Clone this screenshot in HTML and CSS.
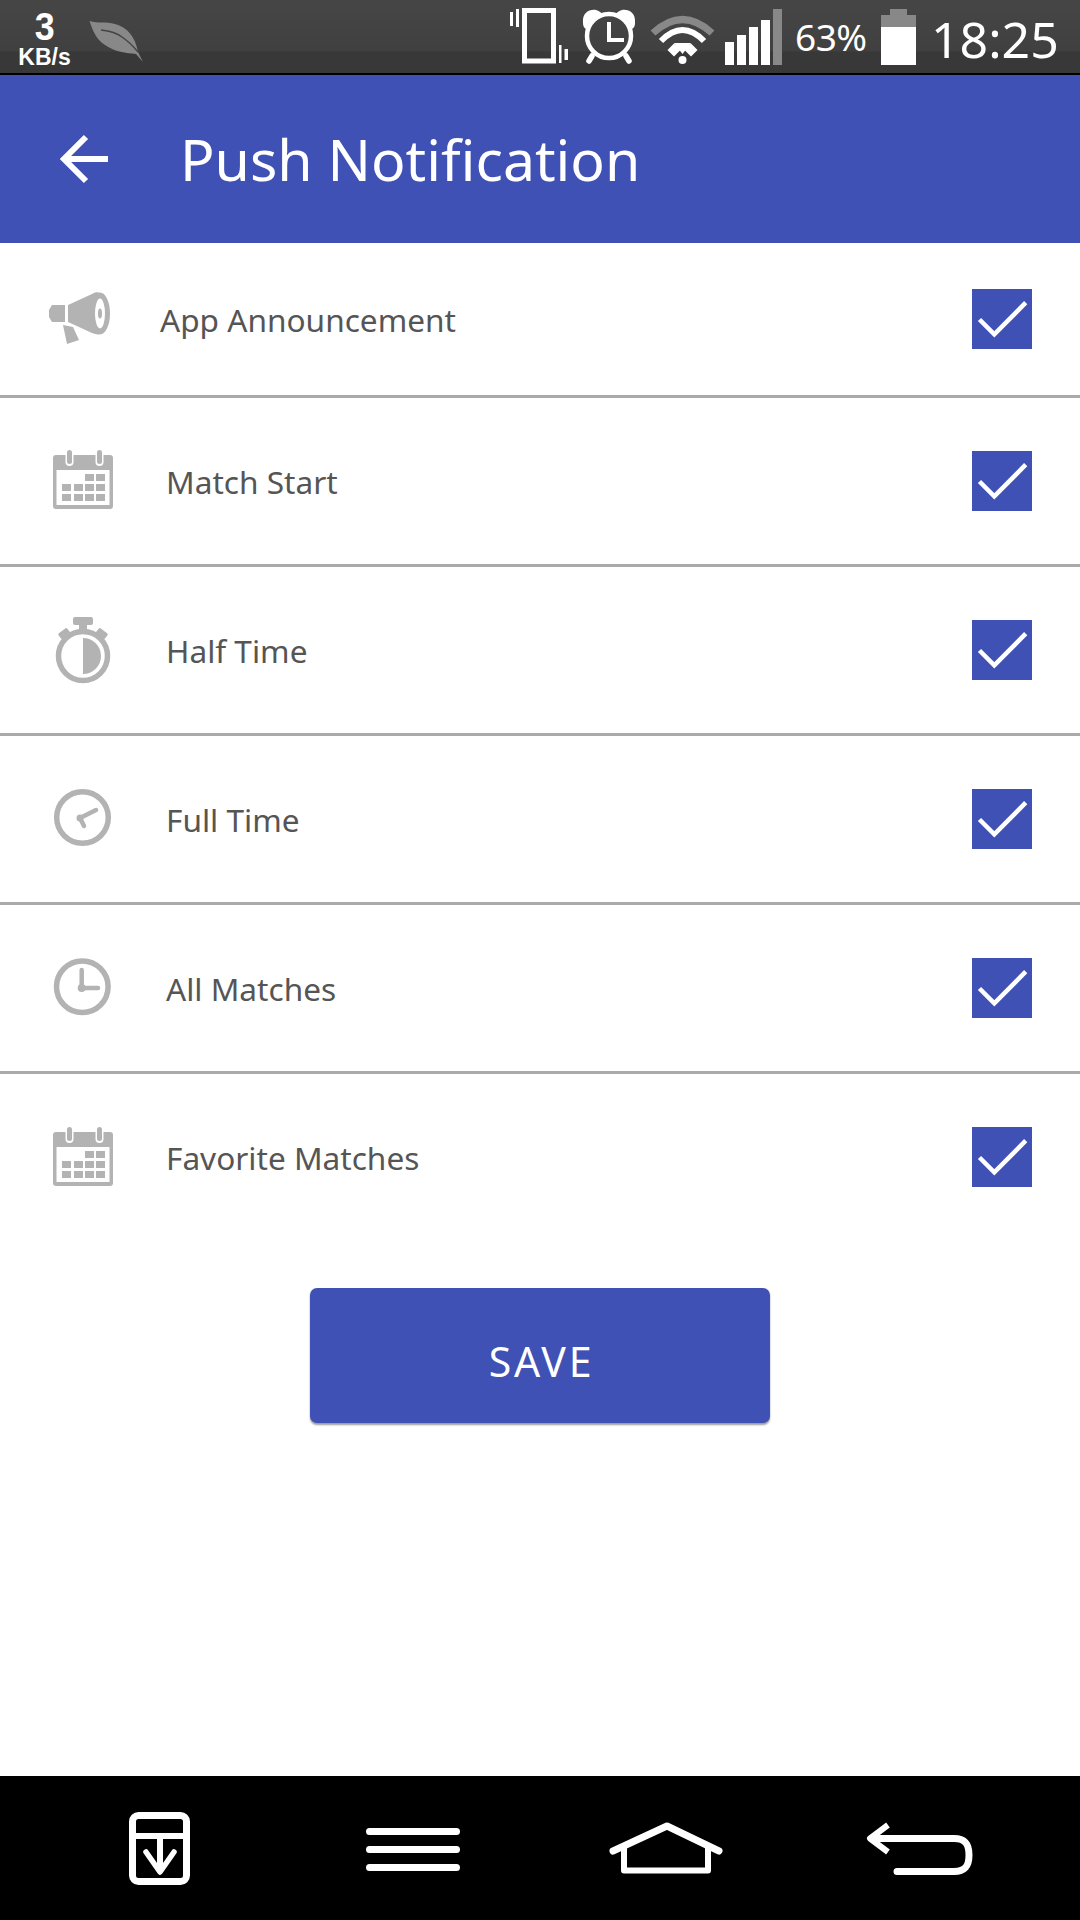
FILE: index.html
```html
<!DOCTYPE html>
<html lang="en">
<head>
<meta charset="utf-8">
<title>Push Notification</title>
<link rel="stylesheet" href="styles.css">
</head>
<body>
<svg class="defs" width="0" height="0" aria-hidden="true">
  <symbol id="calendar" viewBox="0 0 60 59">
    <path class="g" d="M3 5h54a3 3 0 0 1 3 3v48a3 3 0 0 1-3 3H3a3 3 0 0 1-3-3V8a3 3 0 0 1 3-3z"/>
    <rect class="w" x="3.500" y="20" width="53" height="35"/>
    <rect class="w" x="12.500" y="0" width="8" height="16" rx="4"/>
    <rect class="w" x="42.500" y="0" width="8" height="16" rx="4"/>
    <rect class="g" x="14" y="0" width="5" height="14" rx="2.500"/>
    <rect class="g" x="44" y="0" width="5" height="14" rx="2.500"/>
    <path class="g" d="M32 24h9v7h-9zM43 24h9v7h-9zM9 34h9v7H9zM21 34h9v7h-9zM32 34h9v7h-9zM43 34h9v7h-9zM9 44h9v7H9zM21 44h9v7h-9zM32 44h9v7h-9zM43 44h9v7h-9z"/>
  </symbol>
  <symbol id="check" viewBox="0 0 60 60">
    <rect class="box" width="60" height="60"/>
    <path class="tick" d="M7.500 30.500L22.300 45.300 53.700 13.700"/>
  </symbol>
</svg>

<div class="page">
  <header class="status">
    <div class="speed"><span class="speed-num">3</span><span class="speed-unit">KB/s</span></div>
    <svg class="st st-leaf" viewBox="0 0 58 73">
      <path class="gm" d="M1.500 21C10 24 18 21 27 24 39 27 47 36 50 52L55 62 48 54C38 53 27 52 17 45 8 39 5 31 1.500 21z"/>
      <path class="vein" d="M13 30C22 31 29 33 34 37 40 41 45 46 50 52"/>
    </svg>
    <svg class="st st-vib" viewBox="0 0 58 73">
      <rect class="on-s" x="14.500" y="10.500" width="29" height="50.500" stroke-width="5"/>
      <path class="on" d="M0 12h3v14H0zM6 9h3v18H6zM49 45h2.500v18H49zM54.500 49H58v11h-3.500z"/>
    </svg>
    <svg class="st st-alarm" viewBox="0 0 58 73">
      <circle class="on-s" cx="28" cy="36" r="22" stroke-width="4.500"/>
      <path class="on-s" stroke-width="4" d="M28 22v18h15"/>
      <path class="on" d="M2 23C1 13 8 9 15 10 18 11 20 12 21 14 13 16 8 21 5 29 3 28 2 26 2 23zM54 23C55 13 48 9 41 10 38 11 36 12 35 14 43 16 48 21 51 29 53 28 54 26 54 23z"/>
      <path class="on-r" stroke-width="5.500" d="M11 56L8 61M45 56L48 61"/>
    </svg>
    <svg class="st st-wifi" viewBox="0 0 68 73">
      <path class="arc-off" d="M4 33Q33.500 6 63 33"/>
      <path class="arc-on" d="M12 41Q33.500 19 55 41"/>
      <path class="on" d="M25 43.500l6.500 6.500-6.500 6.500-6.500-6.500zM42 43.500l6.500 6.500-6.500 6.500-6.500-6.500zM25 43h17l-8.500 11z"/>
      <circle class="on" cx="33.500" cy="60" r="4"/>
    </svg>
    <svg class="st st-signal" viewBox="0 0 58 73">
      <path class="on" d="M0 42h9v23H0zM12 35h9v30h-9zM24 27h9v38h-9zM36 20h9v45h-9z"/>
      <rect class="gm" x="48" y="9" width="9" height="56"/>
    </svg>
    <span class="pct">63%</span>
    <svg class="st st-batt" viewBox="0 0 36 73">
      <path class="gm" d="M9 9h17v6h9v12H0V15h9z"/>
      <rect class="on" x="0" y="27" width="35" height="38"/>
    </svg>
    <span class="clock">18:25</span>
  </header>

  <div class="appbar">
    <svg class="appbar-back" viewBox="0 0 56 56">
      <path d="M9 28H52M30 6L8 28 30 50"/>
    </svg>
    <h1 class="appbar-title">Push Notification</h1>
  </div>

  <ul class="list">
    <li class="row row-first">
      <svg class="row-icon" viewBox="0 0 70 70">
        <path class="g" d="M6 21H19V38H6L3 33V26z"/>
        <path class="g" d="M22 21L46 10C49 8 52 8 54 9V50C52 51 49 50 46 49L22 38z"/>
        <ellipse class="g" cx="54" cy="29.500" rx="10" ry="21"/>
        <ellipse class="w" cx="54" cy="29.500" rx="5" ry="15"/>
        <ellipse class="g" cx="54" cy="29.500" rx="2" ry="5"/>
        <path class="g" d="M17 41L27 43 33 56 21 60z"/>
      </svg>
      <span class="label label-first">App Announcement</span>
      <svg class="checkbox"><use href="#check"/></svg>
    </li>
    <li class="row">
      <svg class="row-icon" viewBox="0 0 70 70"><use href="#calendar" x="7" y="4" width="60" height="59"/></svg>
      <span class="label">Match Start</span>
      <svg class="checkbox"><use href="#check"/></svg>
    </li>
    <li class="row">
      <svg class="row-icon" viewBox="0 0 70 70">
        <circle class="ring" cx="37" cy="41" r="24.500"/>
        <path class="g" d="M37 23a18 18 0 0 1 0 36z"/>
        <rect class="g" x="27" y="2" width="20" height="8" rx="2"/>
        <rect class="g" x="33" y="9" width="8" height="8"/>
        <rect class="g" x="13" y="15" width="11" height="8" rx="1.500" transform="rotate(-38 18.500 19)"/>
        <rect class="g" x="50" y="15" width="11" height="8" rx="1.500" transform="rotate(38 55.500 19)"/>
      </svg>
      <span class="label">Half Time</span>
      <svg class="checkbox"><use href="#check"/></svg>
    </li>
    <li class="row">
      <svg class="row-icon" viewBox="0 0 70 70">
        <circle class="ring" cx="36.500" cy="33.500" r="25.800"/>
        <path class="hand" d="M50 26L34 34 38 42"/>
        <circle class="g" cx="34" cy="34" r="3.500"/>
      </svg>
      <span class="label">Full Time</span>
      <svg class="checkbox"><use href="#check"/></svg>
    </li>
    <li class="row">
      <svg class="row-icon" viewBox="0 0 70 70">
        <circle class="ring" cx="36.300" cy="33.700" r="25.800"/>
        <path class="hand" d="M35.700 17V35H52"/>
        <circle class="g" cx="35.700" cy="35" r="4"/>
      </svg>
      <span class="label">All Matches</span>
      <svg class="checkbox"><use href="#check"/></svg>
    </li>
    <li class="row row-last">
      <svg class="row-icon" viewBox="0 0 70 70"><use href="#calendar" x="7" y="5" width="60" height="59"/></svg>
      <span class="label">Favorite Matches</span>
      <svg class="checkbox"><use href="#check"/></svg>
    </li>
  </ul>

  <button class="save" type="button">SAVE</button>

  <nav class="nav">
    <svg class="nav-i nav-dl" viewBox="0 0 68 144">
      <rect class="nav-s" x="6.500" y="39.500" width="54" height="66" rx="6"/>
      <path class="nav-s nav-thin" d="M6 60H61M34 63V94"/>
      <path class="nav-s nav-head" d="M20 76L34 96 48 76"/>
    </svg>
    <svg class="nav-i nav-menu" viewBox="0 0 102 144">
      <path class="nav-s" d="M7.500 55.500H94.500M7.500 73.500H94.500M7.500 91.500H94.500"/>
    </svg>
    <svg class="nav-i nav-home" viewBox="0 0 122 144">
      <path class="nav-s" d="M7 75L61 50 113 75"/>
      <path class="nav-s nav-thin" d="M18 70V94.500H102V70"/>
    </svg>
    <svg class="nav-i nav-back" viewBox="0 0 112 144">
      <path class="nav-s nav-thin" d="M24 49L6 62.500 24 76"/>
      <path class="nav-s" d="M8 62.500H90C103 62.500 105 70 105 79 105 88 103 95.500 90 95.500H33"/>
    </svg>
  </nav>
</div>
</body>
</html>
```
FILE: styles.css
```css
* { box-sizing: border-box; }
html, body { margin: 0; padding: 0; background: #fff; }
body { font-family: "Noto Sans", sans-serif; }
.defs { display: block; height: 0; }
.page { width: 1080px; height: 1920px; display: flex; flex-direction: column; overflow: hidden; }

.g { fill: #b3b3b3; }
.w { fill: #fff; }
.box { fill: #3f51b5; }
.tick { fill: none; stroke: #fff; stroke-width: 4.5; }
.ring { fill: none; stroke: #b3b3b3; stroke-width: 5.5; }
.hand { fill: none; stroke: #b3b3b3; stroke-width: 4.5; stroke-linecap: round; stroke-linejoin: round; }

.status {
  height: 75px; flex: none; display: flex; align-items: flex-start;
  padding-left: 18px; color: #fff;
  border-bottom: 2px solid #000;
  background: linear-gradient(#464646 0, #404040 70%, #383838 71%, #383838 100%);
}
.speed { width: 53px; display: flex; flex-direction: column; align-items: center; font-family: "Liberation Sans", sans-serif; font-weight: 700; }
.speed-num { font-size: 39px; line-height: 38px; margin-top: 8px; transform: scaleX(.92); }
.speed-unit { font-size: 23px; line-height: 22px; }
.st { height: 73px; flex: none; display: block; }
.st-leaf { width: 58px; margin-left: 17px; }
.st-vib { width: 58px; margin-left: 364px; }
.st-alarm { width: 58px; margin-left: 13px; }
.st-wifi { width: 68px; margin-left: 10px; }
.st-signal { width: 58px; margin-left: 8px; }
.st-batt { width: 36px; margin-left: 13px; }
.gm { fill: #888; }
.vein { fill: none; stroke: #444; stroke-width: 1.5; }
.on { fill: #fff; }
.on-s { fill: none; stroke: #fff; }
.on-r { fill: none; stroke: #fff; stroke-linecap: round; }
.arc-off { fill: none; stroke: #888; stroke-width: 7; }
.arc-on { fill: none; stroke: #fff; stroke-width: 6; }
.pct { font-size: 37px; line-height: 73px; margin-left: 12px; width: 73px; white-space: nowrap; letter-spacing: -.5px; }
.clock { font-size: 50px; line-height: 78px; margin-left: 14px; white-space: nowrap; }

.appbar { height: 168px; flex: none; background: #3f51b5; display: flex; align-items: center; padding-left: 56px; color: #fff; }
.appbar-back { width: 56px; height: 56px; flex: none; fill: none; stroke: #fff; stroke-width: 6; }
.appbar-title { margin: 2px 0 0 68px; font-size: 57.2px; font-weight: 400; line-height: 1; white-space: nowrap; }

.list { list-style: none; margin: 0; padding: 0; flex: none; }
.row { height: 169px; display: flex; align-items: center; padding: 0 48px 0 46px; border-bottom: 3px solid #aaa; }
.row-first { height: 155px; }
.row-last { height: 166px; border-bottom: 0; }
.row-icon { width: 70px; height: 70px; flex: none; }
.label { margin-left: 50px; font-size: 31.6px; color: #555; white-space: nowrap; }
.label-first { margin-left: 44px; }
.checkbox { width: 60px; height: 60px; margin-left: auto; flex: none; }

.save {
  display: block; flex: none; width: 460px; height: 135px; margin: 48px auto 0;
  border: 0; border-radius: 7px; background: #3f51b5; color: #fff;
  font-family: "Noto Sans", sans-serif; font-size: 41px; letter-spacing: 2.7px;
  padding: 10px 0 0 3px;
  box-shadow: 0 2px 2px rgba(0,0,0,.4);
}

.nav { height: 144px; margin-top: auto; flex: none; background: #000; display: flex; padding-left: 126px; }
.nav-i { height: 144px; flex: none; }
.nav-dl { width: 68px; }
.nav-menu { width: 102px; margin-left: 168px; }
.nav-home { width: 122px; margin-left: 142px; }
.nav-back { width: 112px; margin-left: 136px; }
.nav-s { fill: none; stroke: #fff; stroke-width: 7; stroke-linecap: round; stroke-linejoin: round; }
.nav-thin { stroke-width: 6; stroke-linecap: butt; }
.nav-head { stroke-width: 5.5; }
```
